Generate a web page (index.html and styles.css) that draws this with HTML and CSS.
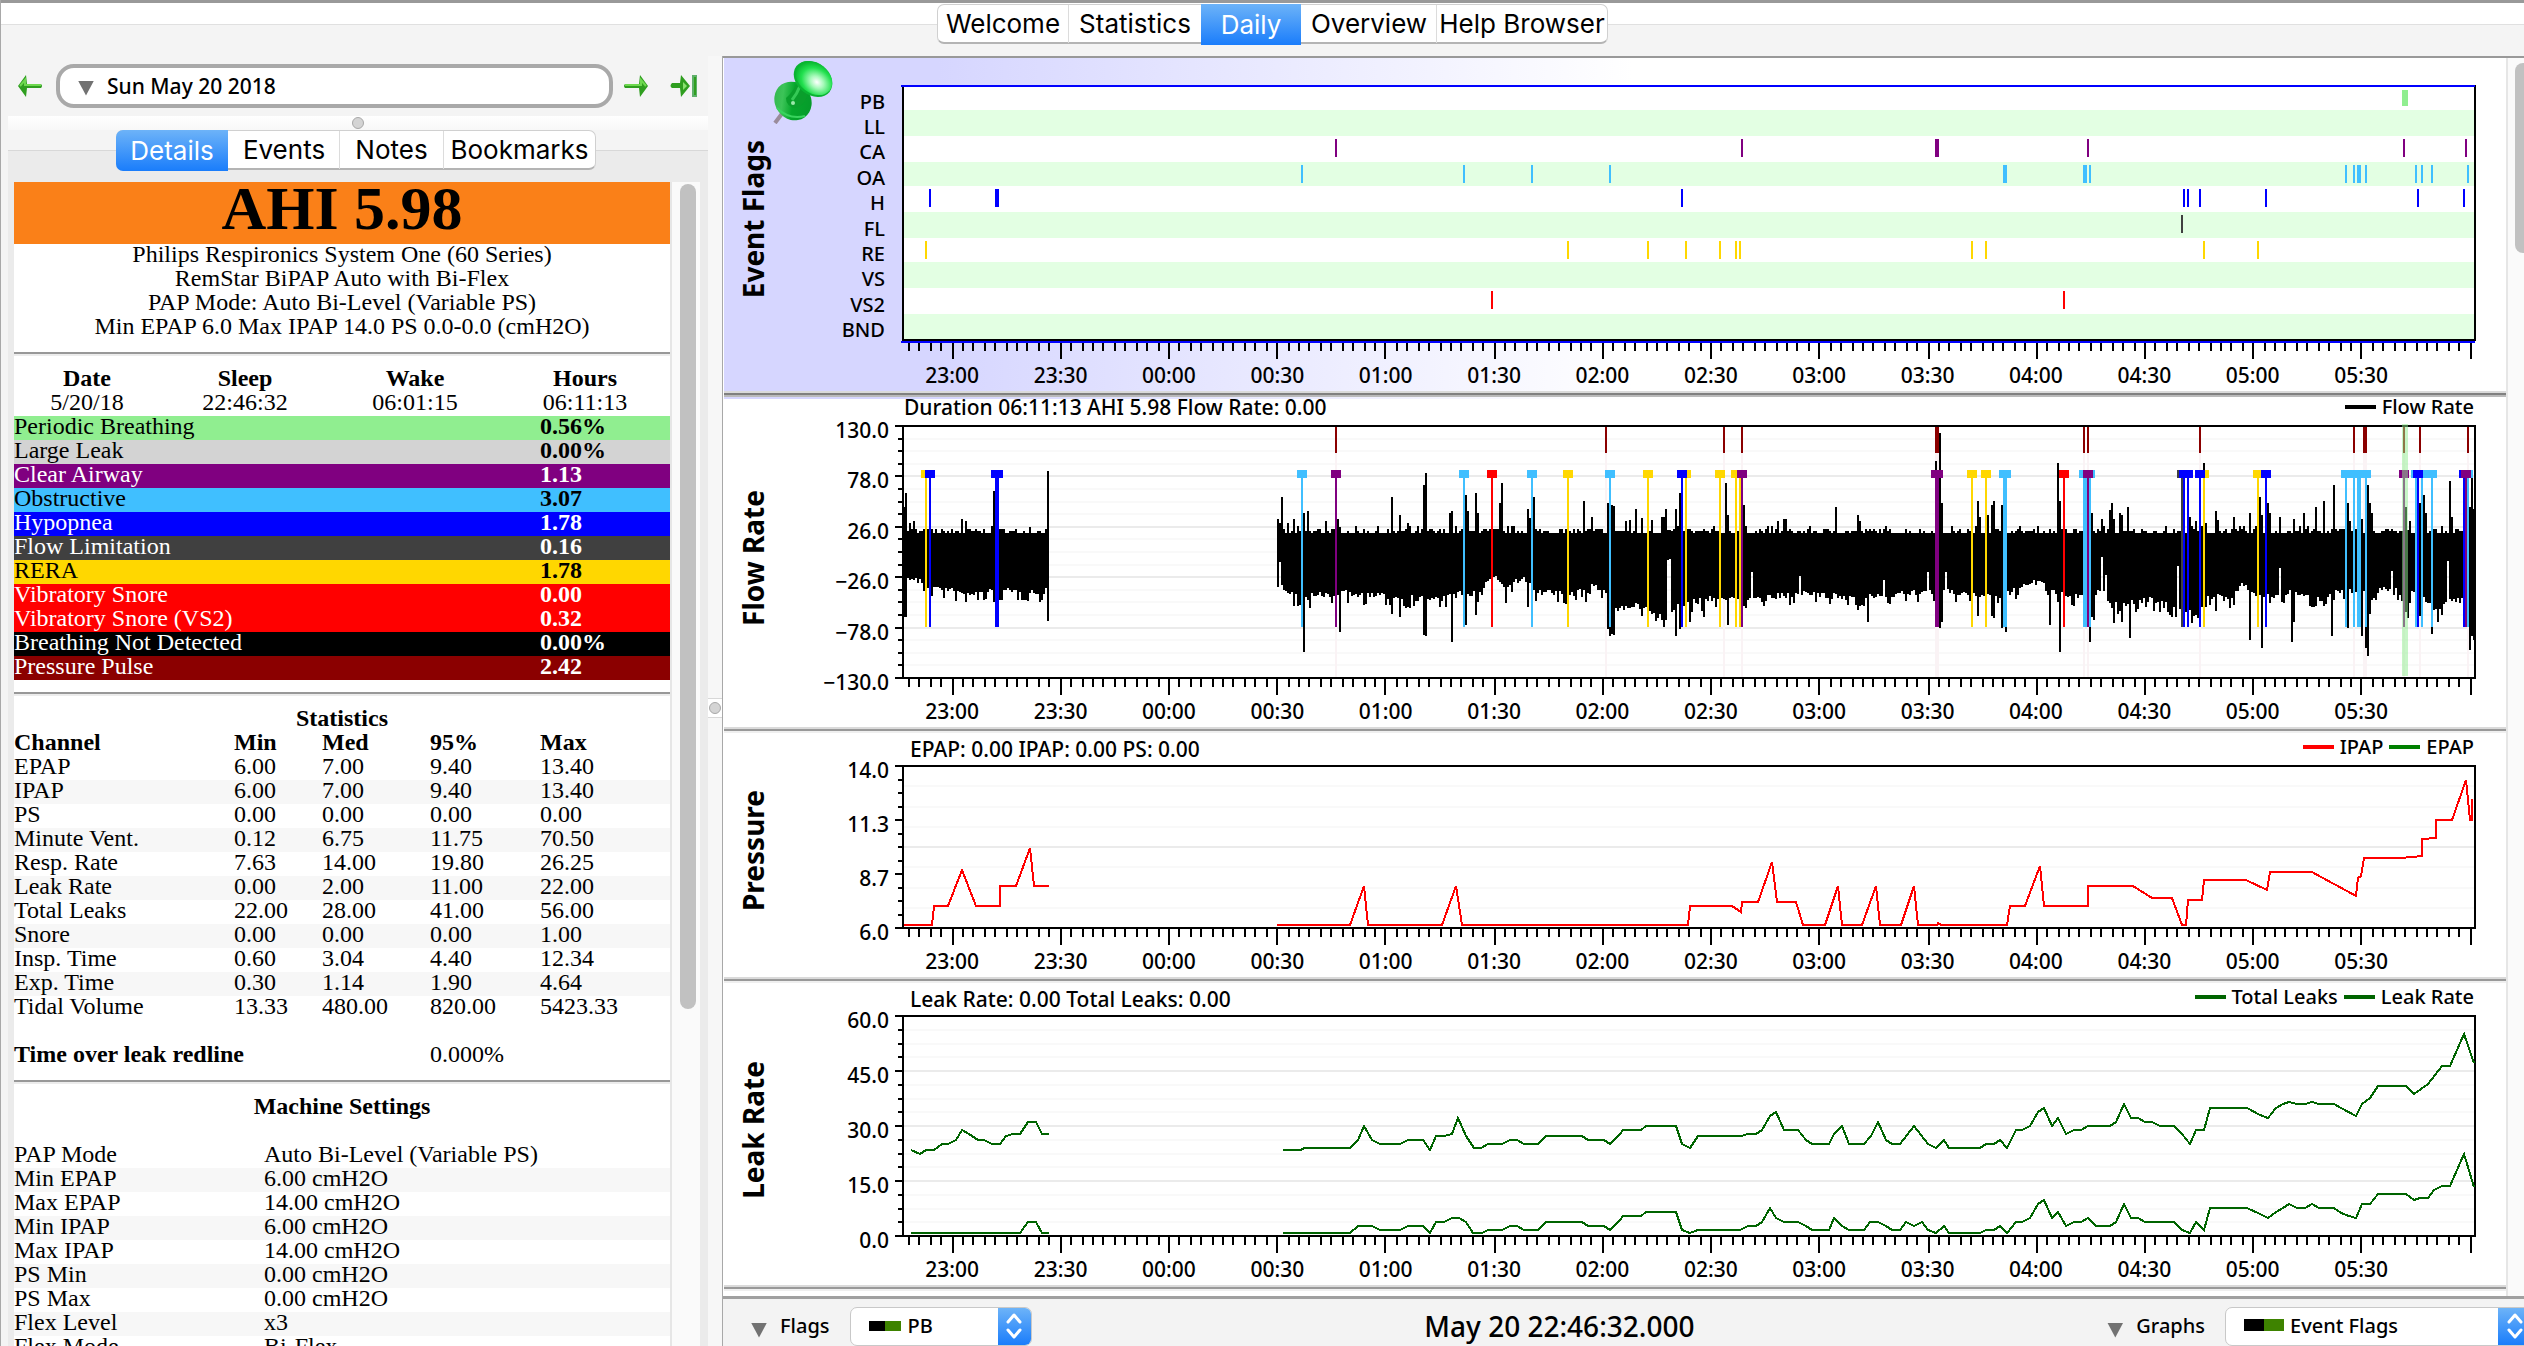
FILE: index.html
```html
<!DOCTYPE html>
<html lang="en">
<head>
<meta charset="utf-8">
<title>Daily</title>
<link rel="stylesheet" href="styles.css">
</head>
<body>
<header class="topbar">
  <nav class="tabs tabs-main" aria-label="Pages">
    <button class="tab">Welcome</button>
    <button class="tab">Statistics</button>
    <button class="tab active">Daily</button>
    <button class="tab">Overview</button>
    <button class="tab">Help Browser</button>
  </nav>
</header>
<div class="workspace">
  <aside class="sidebar">
    <div class="datebar">
      <button class="arrow" aria-label="Previous day">
        <svg width="26" height="24" viewBox="0 0 26 24"><path d="M1 12 9 1l1 9h14q2 2 0 4H10l-1 9z" fill="#2f9e1f"/><path d="M3 12l5-6v5h16" fill="none" stroke="#6ed84f" stroke-width="2"/></svg>
      </button>
      <button class="date"><span class="tri"></span>Sun May 20 2018</button>
      <button class="arrow next" aria-label="Next day">
        <svg width="26" height="24" viewBox="0 0 26 24"><path d="M25 12 17 1l-1 9H2q-2 2 0 4h14l1 9z" fill="#2f9e1f"/><path d="M2 11h16V6l5 6" fill="none" stroke="#6ed84f" stroke-width="2"/></svg>
      </button>
      <button class="arrow last" aria-label="Last day">
        <svg width="28" height="24" viewBox="0 0 28 24"><path d="M20 12 11 1l-1 8H2q-3 3 0 5h8l1 9z" fill="#2f9e1f"/><path d="M13 8l4 4-4 4" fill="#8be070"/><path d="M22 1h5v22h-5z" fill="#5fb06a"/><path d="M24 3h2v18h-2z" fill="#2f9e1f"/></svg>
      </button>
    </div>
    <div class="hsplit"><span class="knob"></span></div>
    <div class="subtabs">
      <nav class="tabs tabs-sub" aria-label="Day sections">
        <button class="tab active">Details</button>
        <button class="tab">Events</button>
        <button class="tab">Notes</button>
        <button class="tab">Bookmarks</button>
      </nav>
    </div>
    <div class="group">
      <article class="report">
        <h1 class="ahi">AHI 5.98</h1>
        <p class="machine">Philips Respironics System One (60 Series)<br>RemStar BiPAP Auto with Bi-Flex<br>PAP Mode: Auto Bi-Level (Variable PS)<br>Min EPAP 6.0 Max IPAP 14.0 PS 0.0-0.0 (cmH2O)</p>
        <hr>
        <table class="session">
          <tr><th>Date</th><th>Sleep</th><th>Wake</th><th>Hours</th></tr>
          <tr><td>5/20/18</td><td>22:46:32</td><td>06:01:15</td><td>06:11:13</td></tr>
        </table>
        <table class="indices">
          <tr class="pb"><td>Periodic Breathing</td><th>0.56%</th></tr>
          <tr class="ll"><td>Large Leak</td><th>0.00%</th></tr>
          <tr class="ca"><td>Clear Airway</td><th>1.13</th></tr>
          <tr class="oa"><td>Obstructive</td><th>3.07</th></tr>
          <tr class="hy"><td>Hypopnea</td><th>1.78</th></tr>
          <tr class="fl"><td>Flow Limitation</td><th>0.16</th></tr>
          <tr class="re"><td>RERA</td><th>1.78</th></tr>
          <tr class="vs"><td>Vibratory Snore</td><th>0.00</th></tr>
          <tr class="vs"><td>Vibratory Snore (VS2)</td><th>0.32</th></tr>
          <tr class="bnd"><td>Breathing Not Detected</td><th>0.00%</th></tr>
          <tr class="pp"><td>Pressure Pulse</td><th>2.42</th></tr>
        </table>
        <hr>
        <table class="stats">
          <caption>Statistics</caption>
          <thead><tr><th>Channel</th><th>Min</th><th>Med</th><th>95%</th><th>Max</th></tr></thead>
          <tbody>
          <tr><td>EPAP</td><td>6.00</td><td>7.00</td><td>9.40</td><td>13.40</td></tr>
          <tr><td>IPAP</td><td>6.00</td><td>7.00</td><td>9.40</td><td>13.40</td></tr>
          <tr><td>PS</td><td>0.00</td><td>0.00</td><td>0.00</td><td>0.00</td></tr>
          <tr><td>Minute Vent.</td><td>0.12</td><td>6.75</td><td>11.75</td><td>70.50</td></tr>
          <tr><td>Resp. Rate</td><td>7.63</td><td>14.00</td><td>19.80</td><td>26.25</td></tr>
          <tr><td>Leak Rate</td><td>0.00</td><td>2.00</td><td>11.00</td><td>22.00</td></tr>
          <tr><td>Total Leaks</td><td>22.00</td><td>28.00</td><td>41.00</td><td>56.00</td></tr>
          <tr><td>Snore</td><td>0.00</td><td>0.00</td><td>0.00</td><td>1.00</td></tr>
          <tr><td>Insp. Time</td><td>0.60</td><td>3.04</td><td>4.40</td><td>12.34</td></tr>
          <tr><td>Exp. Time</td><td>0.30</td><td>1.14</td><td>1.90</td><td>4.64</td></tr>
          <tr><td>Tidal Volume</td><td>13.33</td><td>480.00</td><td>820.00</td><td>5423.33</td></tr>
          </tbody>
          <tfoot><tr><th colspan="3">Time over leak redline</th><td colspan="2">0.000%</td></tr></tfoot>
        </table>
        <hr>
        <table class="settings">
          <caption>Machine Settings</caption>
          <tbody>
          <tr><td>PAP Mode</td><td>Auto Bi-Level (Variable PS)</td></tr>
          <tr><td>Min EPAP</td><td>6.00 cmH2O</td></tr>
          <tr><td>Max EPAP</td><td>14.00 cmH2O</td></tr>
          <tr><td>Min IPAP</td><td>6.00 cmH2O</td></tr>
          <tr><td>Max IPAP</td><td>14.00 cmH2O</td></tr>
          <tr><td>PS Min</td><td>0.00 cmH2O</td></tr>
          <tr><td>PS Max</td><td>0.00 cmH2O</td></tr>
          <tr><td>Flex Level</td><td>x3</td></tr>
          <tr><td>Flex Mode</td><td>Bi-Flex</td></tr>
          </tbody>
        </table>
      </article>
      <div class="scroll side-scroll"><span class="thumb"></span></div>
    </div>
  </aside>
  <div class="vsplit"><div class="grip"><span class="knob"></span></div></div>
  <main class="graphs">
    <div class="graph-area">
      <div class="stack">
        <section class="graph flags-graph">
          <svg class="pin" width="60" height="64" viewBox="0 0 60 64">
            <defs>
              <radialGradient id="cap" cx=".62" cy=".55" r=".6"><stop offset="0" stop-color="#fff"/><stop offset=".3" stop-color="#a8fabb"/><stop offset=".7" stop-color="#22e04f"/><stop offset="1" stop-color="#08b52f"/></radialGradient>
              <linearGradient id="base" x1="0" y1="0" x2="1" y2="1"><stop offset="0" stop-color="#2fae4a"/><stop offset=".3" stop-color="#3cc458"/><stop offset=".5" stop-color="#06a72c"/><stop offset="1" stop-color="#06962a"/></linearGradient>
            </defs>
            <path d="M2 63 11 51" stroke="#9a8c9c" stroke-width="4"/>
            <ellipse cx="20" cy="41" rx="18" ry="20" transform="rotate(-35 20 41)" fill="url(#base)"/>
            <path d="M4 48q12 12 28 8" fill="none" stroke="#39d45e" stroke-width="2"/>
            <path d="M23 25q-4 8-10 13 0 8 9 10 9-2 12-12 3-5 9-8z" fill="#0a9e2c"/>
            <path d="M27 26q-3 8-8 14" fill="none" stroke="#35c956" stroke-width="3"/>
            <circle cx="20" cy="43" r="2" fill="#9be8ab"/>
            <ellipse cx="40" cy="19" rx="21" ry="16" transform="rotate(38 40 19)" fill="#0ab332"/>
            <ellipse cx="41" cy="18" rx="20" ry="15" transform="rotate(38 41 18)" fill="url(#cap)"/>
          </svg>
          <h2 class="title">Event Flags</h2>
          <ol class="rows">
            <li>PB</li><li>LL</li><li>CA</li><li>OA</li><li>H</li><li>FL</li><li>RE</li><li>VS</li><li>VS2</li><li>BND</li>
          </ol>
          <div class="plot"><svg id="flags" height="258" viewBox="902 85 1574 258" preserveAspectRatio="none"></svg></div>
          <div class="xaxis"></div>
        </section>
        <section class="graph flow-graph">
          <h2 class="title">Flow Rate</h2>
          <div class="head"><span>Duration 06:11:13 AHI 5.98 Flow Rate: 0.00</span><span class="legend"><i class="key black"></i>Flow Rate</span></div>
          <div class="yaxis"><span>130.0</span><span>78.0</span><span>26.0</span><span>−26.0</span><span>−78.0</span><span>−130.0</span></div>
          <div class="plot"><svg id="flow" height="254" viewBox="902 425 1574 254" preserveAspectRatio="none"></svg></div>
          <div class="xaxis"></div>
        </section>
        <section class="graph pressure-graph">
          <h2 class="title">Pressure</h2>
          <div class="head inset"><span>EPAP: 0.00 IPAP: 0.00 PS: 0.00</span><span class="legend"><i class="key red"></i>IPAP<i class="key green"></i>EPAP</span></div>
          <div class="yaxis"><span>14.0</span><span>11.3</span><span>8.7</span><span>6.0</span></div>
          <div class="plot"><svg id="pressure" height="164" viewBox="902 765 1574 164" preserveAspectRatio="none"></svg></div>
          <div class="xaxis"></div>
        </section>
        <section class="graph leak-graph">
          <h2 class="title">Leak Rate</h2>
          <div class="head inset"><span>Leak Rate: 0.00 Total Leaks: 0.00</span><span class="legend"><i class="key dark"></i>Total Leaks<i class="key dark"></i>Leak Rate</span></div>
          <div class="yaxis"><span>60.0</span><span>45.0</span><span>30.0</span><span>15.0</span><span>0.0</span></div>
          <div class="plot"><svg id="leak" height="222" viewBox="902 1015 1574 222" preserveAspectRatio="none"></svg></div>
          <div class="xaxis"></div>
        </section>
      </div>
      <div class="scroll main-scroll"><span class="thumb"></span></div>
    </div>
    <footer class="bottombar">
      <span class="tri"></span>
      <label for="flagSel">Flags</label>
      <div class="combo combo-flags"><select id="flagSel"><option>PB</option></select><i class="swatch"></i><i class="updown"><svg width="16" height="26" viewBox="0 0 16 26"><path d="M2 9l6-7 6 7M2 17l6 7 6-7" fill="none" stroke="#fff" stroke-width="3" stroke-linecap="round" stroke-linejoin="round"/></svg></i></div>
      <time class="cursor-time">May 20 22:46:32.000</time>
      <span class="tri"></span>
      <label for="graphSel">Graphs</label>
      <div class="combo combo-graphs"><select id="graphSel"><option>Event Flags</option></select><i class="swatch"></i><i class="updown"><svg width="16" height="26" viewBox="0 0 16 26"><path d="M2 9l6-7 6 7M2 17l6 7 6-7" fill="none" stroke="#fff" stroke-width="3" stroke-linecap="round" stroke-linejoin="round"/></svg></i></div>
    </footer>
  </main>
</div>
<script src="charts.js"></script>
</body>
</html>
```

FILE: styles.css
```css
* { box-sizing: border-box; }
body {
  margin: 0; height: 100vh; overflow: hidden;
  display: flex; flex-direction: column;
  background: #f4f4f4; color: #000;
  border-left: 1px solid #a8a8a8;
  font: 500 20px/24px "Noto Sans", "Open Sans", sans-serif;
}
button { font: inherit; color: inherit; border: 0; padding: 0; background: none; }
h1, h2, p, ol { margin: 0; padding: 0; }
ol { list-style: none; }

/* tabs */
.topbar {
  flex: none; height: 56px; padding: 1px 0 0 20px;
  display: flex; justify-content: center; align-items: flex-start;
  border-top: 3px solid #999;
  background: linear-gradient(#fff 21px, #e0e0e0 21px 22px, #f4f4f4 22px);
}
.tabs {
  display: grid; height: 40px; background: #fff;
  border: 1px solid #d0d0d0; border-bottom: 2px solid #b4b4b4; border-radius: 7px;
  font: 26px/38px Inter, sans-serif;
}
.tabs-main { grid-template-columns: 130px 133px 100px 135px 171px; }
.tabs-sub { grid-template-columns: 111px 111px 104px 152px; }
.tab { border-left: 1px solid #dcdcdc; white-space: nowrap; }
.tab:first-child, .tab.active, .tab.active + .tab { border-left-color: transparent; }
.tab:first-child { border-left: 0; }
.tab.active {
  color: #fff; margin: -1px 0 -2px;
  background: linear-gradient(#6db3f8, #1a7dfb); border: 0;
}
.tabs-sub .tab.active { border-radius: 7px 0 0 7px; margin-left: -1px; }

.workspace { flex: 1; min-height: 0; display: flex; }

/* sidebar */
.sidebar { flex: none; width: 707px; display: flex; flex-direction: column; }
.datebar { flex: none; height: 60px; padding: 0 10px 0 16px; display: flex; align-items: center; }
.arrow { height: 24px; display: block; }
.arrow svg { display: block; }
.date {
  flex: 1; height: 44px; margin: 0 10px 0 13px; padding-left: 18px;
  display: flex; align-items: center; gap: 13px;
  border: 4px solid #a9a9a9; border-radius: 18px; background: #fff; font-size: 21px;
}
.last { margin-left: 21px; }
.tri { flex: none; width: 16px; height: 15px; margin-top: 4px; background: #727272; clip-path: polygon(0 0, 100% 0, 50% 100%); }
.hsplit {
  flex: none; height: 14px; margin-left: 7px; display: flex; justify-content: center; align-items: center;
  background: linear-gradient(#fff, #f8f8f8);
}
.knob { width: 12px; height: 12px; border-radius: 50%; border: 1px solid #a8a8a8; background: #d4d4d4; }
.subtabs {
  flex: none; height: 52px; margin-left: 7px; padding-right: 4px; display: flex; justify-content: center;
  background: linear-gradient(#f4f4f4 20px, #d8d8d8 20px 21px, #ebebeb 21px);
}
.group { flex: 1; min-height: 0; margin-left: 7px; padding: 0 8px 0 6px; display: flex; background: #ebebeb; }
.report {
  flex: 1; background: #fff;
  font: 24px/24px "Liberation Serif", "Times New Roman", serif;
}
.ahi { height: 60px; background: #fa8018; text-align: center; font-size: 62px; line-height: 52px; }
.machine { text-align: center; white-space: nowrap; background: linear-gradient(#fa8018 2px, transparent 2px); padding-bottom: 2px; }
hr { height: 4px; margin: 12px 0; border: 0; border-top: 2px solid #989898; background: #ececec; }
table { width: 100%; border-collapse: collapse; table-layout: fixed; }
th, td { padding: 0; height: 24px; line-height: 20px; vertical-align: top; text-align: left; white-space: nowrap; }
caption { font-weight: bold; line-height: 20px; padding-bottom: 4px; }
.session th, .session td { text-align: center; }
.session th:first-child { width: 146px; }
.indices th { width: 130px; }
.pb { background: #90ee90; }
.ll { background: #d3d3d3; }
.ca { background: #800080; color: #fff; }
.oa { background: #40bfff; }
.hy { background: #00f; color: #fff; }
.fl { background: #404040; color: #fff; }
.re { background: #ffd700; }
.vs { background: #f00; color: #fff; }
.bnd { background: #000; color: #fff; }
.pp { background: #8b0000; color: #fff; }
.stats th:nth-child(1) { width: 220px; }
.stats th:nth-child(2) { width: 88px; }
.stats th:nth-child(3) { width: 108px; }
.stats th:nth-child(4) { width: 110px; }
.stats tbody tr:nth-child(even), .settings tr:nth-child(even) { background: #f7f7f7; }
.stats tfoot th, .stats tfoot td { height: 48px; padding-top: 24px; }
.settings caption { padding-bottom: 28px; }
.settings td:first-child { width: 250px; }

.scroll { flex: none; background: #fafafa; border-left: 2px solid #e6e6e6; }
.thumb { display: block; width: 16px; border-radius: 8px; background: #c1c1c1; }
.side-scroll { width: 30px; padding: 2px 0 0 8px; }
.side-scroll .thumb { height: 825px; }

.vsplit { flex: none; width: 14px; background: #f7f7f7; display: flex; align-items: center; padding-top: 14px; }
.grip { width: 14px; height: 20px; display: flex; align-items: center; justify-content: center; background: #fff; border: solid #d8d8d8; border-width: 1px 0; }

/* graphs */
.graphs { flex: 1; min-width: 0; display: flex; flex-direction: column; border-left: 1px solid #a8a8a8; }
.graph-area { flex: 1; min-height: 0; display: flex; background: #fff; border-top: 2px solid #999; border-bottom: 2px solid #a0a0a0; padding-left: 1px; }
.stack { flex: 1; min-width: 0; }
.main-scroll { width: 18px; padding: 5px 0 0 7px; }
.main-scroll .thumb { height: 190px; }
.graph {
  position: relative; display: grid; grid-template-columns: 58px 120px 1fr 30px;
  padding-bottom: 6px;
  background: linear-gradient(#dadada 2px, #999 2px 4px, #efefef 4px) bottom / 100% 6px no-repeat;
}
.flags-graph {
  padding-top: 27px;
  background:
    linear-gradient(#dadada 2px, #808080 2px 4px, #bababa 4px) bottom / 100% 6px no-repeat,
    linear-gradient(90deg, #d6d6ff 12%, #fff 51%);
}
.flow-graph {
  background:
    linear-gradient(#dadada 2px, #999 2px 4px, #efefef 4px) bottom / 100% 6px no-repeat,
    linear-gradient(90deg, #d6d6ff 12%, #fff 51%) top / 100% 2px no-repeat;
}
.pin { position: absolute; left: 49px; top: 2px; }
.title {
  grid-column: 1; grid-row: 1 / span 3; writing-mode: vertical-rl; transform: rotate(180deg);
  justify-self: center; align-self: center; margin-bottom: 8px;
  font-size: 28px; line-height: 36px; font-weight: 700;
}
.flags-graph .title { margin-bottom: 38px; }
.head { grid-column: 3; grid-row: 1; height: 32px; padding: 0 2px; line-height: 32px; font-size: 21px; display: flex; justify-content: space-between; }
.flow-graph .head { height: 28px; line-height: 20px; }
.head.inset { padding-left: 8px; }
.legend { display: flex; align-items: center; gap: 6px; font-size: 20px; line-height: 20px; height: 20px; margin-top: 4px; }
.flow-graph .legend { margin-top: 0; }
.key { width: 31px; height: 4px; }
.black { background: #000; }
.red { background: #f00; }
.green { background: #008000; }
.dark { background: #006400; }
.yaxis, .rows { grid-column: 2; grid-row: 2; padding-right: 13px; text-align: right; }
.yaxis { display: flex; flex-direction: column; justify-content: space-between; margin: -7px 0 -15px; font-size: 21px; }
.rows { display: grid; grid-template-rows: repeat(10, 1fr); padding-right: 17px; margin: 4px 0 0; align-items: center; }
.plot { grid-column: 3; grid-row: 2; }
.plot svg, .xaxis svg { display: block; width: 100%; overflow: visible; }
.xaxis { grid-column: 3; grid-row: 3; height: 48px; font-size: 21px; line-height: 32px; }
.hours { display: flex; width: 96.4%; margin-left: -4px; }
.hours span { flex: 1; text-align: center; }

/* bottom bar */
.bottombar { flex: none; height: 48px; display: flex; align-items: center; padding: 8px 0 1px 28px; border-top: 1px solid #a0a0a0; background: #f3f3f3; }
.bottombar label { margin: 0 20px 0 13px; }
.bottombar .tri { margin-top: 8px; }
.combo { flex: none; position: relative; height: 39px; border: 1px solid #c8c8c8; border-radius: 7px; background: #fff; overflow: hidden; }
.combo-flags { width: 182px; }
.combo-graphs { width: 307px; margin-right: -8px; }
.combo select { appearance: none; width: 100%; height: 36px; border: 0; padding: 0 0 0 57px; background: none; font: inherit; color: inherit; }
.combo-graphs select { padding-left: 64px; }
.swatch { position: absolute; left: 18px; top: 13px; width: 32px; height: 10px; background: linear-gradient(90deg, #000 50%, #3e8300 50%); }
.combo-graphs .swatch { width: 40px; height: 12px; top: 11px; }
.updown { position: absolute; right: 0; top: 0; bottom: 0; width: 33px; display: flex; align-items: center; justify-content: center; background: linear-gradient(#6db3f8, #1a7dfb); }
.cursor-time { flex: 1; text-align: center; font-size: 28px; padding-right: 20px; }
```

FILE: charts.js
```javascript
const NS = "http://www.w3.org/2000/svg";
const LEFT = 902, RIGHT = 2476;

function add(parent, name, attrs) {
  const el = document.createElementNS(NS, name);
  for (const k in attrs) el.setAttribute(k, attrs[k]);
  parent.appendChild(el);
  return el;
}
function rect(svg, x, y, width, height, fill) {
  return add(svg, "rect", { x, y, width, height, fill, "shape-rendering": "crispEdges" });
}
function frame(svg, top, bottom) {
  rect(svg, LEFT, top, RIGHT - LEFT, 2, "#000");
  rect(svg, LEFT, bottom - 2, RIGHT - LEFT, 2, "#000");
  rect(svg, LEFT, top, 2, bottom - top, "#000");
  rect(svg, RIGHT - 2, top, 2, bottom - top, "#000");
}
function grid(svg, top, height, n, strong) {
  for (let i = 1; i < n; i++)
    rect(svg, LEFT, top + Math.round(height * i / n), RIGHT - LEFT, 2, i % strong ? "#f9f9f9" : "#ebebeb");
}
function yTicks(svg, top, height, n, strong) {
  for (let i = 0; i <= n; i++) {
    const w = i % strong ? 4 : 7;
    rect(svg, LEFT - w, top + Math.round(height * i / n), w, 2, "#000");
  }
}

/* time axis, a tick each three minutes and a label each half hour */
const times = ["23:00","23:30","00:00","00:30","01:00","01:30","02:00","02:30","03:00","03:30","04:00","04:30","05:00","05:30"];
document.querySelectorAll(".xaxis").forEach(axis => {
  const svg = add(axis, "svg", { height: 16, viewBox: `${LEFT} 0 1574 16`, preserveAspectRatio: "none" });
  for (let k = -4; k <= 140; k++)
    rect(svg, 2 * Math.round((951 + 10.845 * k) / 2), 0, 2, k % 10 ? 8 : 16, "#000");
  const row = document.createElement("div");
  row.className = "hours";
  times.forEach(t => { const s = document.createElement("span"); s.textContent = t; row.appendChild(s); });
  axis.appendChild(row);
});

/* events: x and width */
const events = {
  CA: { row: 2, color: "#800080", at: [[1336,2],[1742,2],[1937,4],[2088,2],[2404,2],[2466,2]] },
  OA: { row: 3, color: "#40bfff", at: [[1302,2],[1464,2],[1532,2],[1610,2],[2005,4],[2085,4],[2090,2],[2346,2],[2354,2],[2359,4],[2366,2],[2416,2],[2422,2],[2432,2],[2468,2]] },
  H: { row: 4, color: "#0000ff", at: [[930,2],[997,4],[1682,2],[2184,2],[2188,2],[2200,2],[2266,2],[2418,2],[2464,2]] },
  FL: { row: 5, color: "#404040", at: [[2182,2]] },
  RE: { row: 6, color: "#ffd700", at: [[926,2],[1568,2],[1648,2],[1686,2],[1720,2],[1736,2],[1740,2],[1972,2],[1986,2],[2204,2],[2258,2]] },
  VS2: { row: 8, color: "#ff0000", at: [[1492,2],[2064,2]] }
};
const rowTops = [87,110,136,162,186,212,238,262,288,314,339];

const flags = document.getElementById("flags");
for (let i = 0; i < 10; i++)
  rect(flags, LEFT, rowTops[i], RIGHT - LEFT, rowTops[i + 1] - rowTops[i], i % 2 ? "#e3ffe3" : "#fff");
rect(flags, 2402, 90, 6, 16, "#90ee90");
for (const e of Object.values(events))
  for (const [x, w] of e.at) rect(flags, x - w / 2, rowTops[e.row] + 3, w, 18, e.color);
rect(flags, LEFT, 85, 2, 256, "#000");
rect(flags, RIGHT - 2, 85, 2, 256, "#000");
rect(flags, LEFT, 339, RIGHT - LEFT, 2, "#000");
rect(flags, LEFT - 1, 85, RIGHT - LEFT, 2, "#00f");
rect(flags, LEFT - 1, 341, RIGHT - LEFT, 2, "#00f");

/* flow waveform: lower envelope, then single breaths [x, top, bottom] */
const lower = [[904,572],[916,576],[930,584],[945,586],[960,590],[1000,588],[1050,588],[1278,584],[1300,593],[1340,590],[1400,594],[1440,596],[1464,590],[1482,590],[1490,574],[1497,572],[1506,590],[1512,580],[1528,576],[1536,588],[1570,592],[1590,581],[1604,588],[1612,606],[1636,602],[1660,612],[1676,604],[1690,600],[1720,594],[1760,596],[1800,590],[1840,594],[1880,592],[1936,588],[1965,590],[2000,592],[2012,590],[2020,582],[2045,578],[2050,588],[2080,594],[2102,588],[2112,602],[2150,596],[2170,602],[2195,612],[2208,592],[2230,596],[2242,582],[2262,594],[2290,590],[2320,596],[2336,588],[2370,588],[2395,584],[2404,600],[2413,588],[2436,606],[2450,596],[2474,600]];
const breaths = [[904,507,617],[906,493,617],[910,523,0],[914,521,0],[962,519,0],[966,521,602],[978,0,600],[994,491,602],[999,523,0],[1030,527,0],[1040,0,602],[1048,471,621],[1278,519,587],[1280,523,562],[1282,497,585],[1288,523,0],[1294,519,606],[1304,513,652],[1308,511,600],[1310,0,608],[1326,521,0],[1338,519,0],[1340,527,632],[1392,497,614],[1400,515,617],[1408,523,607],[1424,485,635],[1426,473,636],[1450,513,0],[1452,511,642],[1466,495,625],[1468,511,0],[1476,493,615],[1478,513,602],[1500,503,582],[1502,483,584],[1528,509,607],[1530,518,0],[1534,497,590],[1566,0,604],[1584,501,0],[1586,0,602],[1592,517,0],[1608,503,629],[1610,505,636],[1612,505,634],[1614,506,635],[1626,521,0],[1630,520,0],[1636,509,0],[1642,518,616],[1652,520,0],[1658,0,618],[1662,517,620],[1664,517,627],[1666,509,620],[1668,530,560],[1670,530,559],[1676,509,636],[1680,493,629],[1690,0,622],[1704,0,617],[1726,483,600],[1728,515,625],[1744,505,0],[1746,0,608],[1752,0,572],[1778,521,0],[1784,519,0],[1786,519,0],[1800,0,576],[1836,507,0],[1858,515,610],[1860,521,0],[1868,0,622],[1884,0,580],[1928,0,572],[1936,461,0],[1940,433,628],[1942,503,622],[1946,0,572],[1978,501,616],[1980,517,0],[1988,515,0],[1992,505,616],[1994,501,618],[2002,505,628],[2006,0,632],[2050,0,625],[2058,463,602],[2060,501,652],[2090,0,642],[2092,513,617],[2094,0,620],[2102,519,557],[2106,0,575],[2110,510,0],[2112,503,0],[2114,519,623],[2120,513,0],[2122,515,622],[2128,507,0],[2130,0,638],[2136,0,612],[2164,0,608],[2172,0,617],[2178,0,566],[2190,517,0],[2196,521,0],[2204,463,0],[2206,523,0],[2216,511,611],[2218,520,0],[2234,517,0],[2250,513,640],[2260,497,0],[2262,515,648],[2268,503,0],[2270,513,0],[2280,517,568],[2292,0,642],[2294,519,622],[2304,513,0],[2316,507,606],[2324,501,606],[2332,0,636],[2334,485,600],[2348,503,628],[2350,521,0],[2362,519,636],[2366,0,648],[2368,485,656],[2370,503,614],[2372,513,0],[2392,0,571],[2406,507,612],[2408,530,618],[2410,521,0],[2420,503,616],[2424,495,0],[2426,513,0],[2432,0,634],[2438,0,622],[2448,0,561],[2450,481,0],[2452,517,0],[2470,507,650],[2472,475,636],[2474,509,640]];

let seed = 7;
const rand = () => (seed = (seed * 16807) % 2147483647) / 2147483647;
function envelope(x) {
  let i = 1;
  while (i < lower.length - 1 && lower[i][0] < x) i++;
  const [x0, y0] = lower[i - 1], [x1, y1] = lower[i];
  return y0 + (y1 - y0) * Math.min(1, Math.max(0, (x - x0) / (x1 - x0)));
}
const byX = new Map(breaths.map(b => [b[0], b]));
const flow = document.getElementById("flow");
grid(flow, 425, 252, 20, 4);
const pulses = [[1336,2],[1606,2],[1724,2],[1742,2],[1937,4],[2084,2],[2088,2],[2200,2],[2354,2],[2365,4],[2404,2],[2420,2],[2468,2]];
for (const [x, w] of pulses) {
  rect(flow, x - w / 2, 453, w, 224, "#faf3f5");
  rect(flow, x - w / 2, 427, w, 26, "#8b0000");
}
let wave = "";
for (const [from, to] of [[904, 1048], [1278, 2474]])
  for (let x = from; x <= to; x += 2) {
    const r = rand(), s = rand(), b = byX.get(x) || [x, 0, 0];
    const top = b[1] || (r > .94 ? 526 : r > .75 ? 529 : r > .45 ? 531 : 533);
    const bottom = b[2] || Math.round(envelope(x) + s * 8 + (s > .8 ? 8 * (s - .3) : 0));
    wave += `M${x - 1} ${top}h2V${bottom}h-2z`;
  }
add(flow, "path", { d: wave, fill: "#000", "shape-rendering": "crispEdges" });
for (const key of ["FL", "RE", "OA", "H", "CA", "VS2"]) {
  const e = events[key];
  for (const [x, w] of e.at) {
    rect(flow, x - w / 2, 478, w, 149, e.color);
    rect(flow, x - 4 - w / 2, 470, 8 + w, 8, e.color);
  }
}
frame(flow, 425, 679);
rect(flow, 2402, 424, 6, 252, "rgba(144,238,144,.5)");
yTicks(flow, 425, 252, 20, 4);

function line(svg, color, points) {
  add(svg, "polyline", { points, fill: "none", stroke: color, "stroke-width": 2, "shape-rendering": "crispEdges" });
}

const pressure = document.getElementById("pressure");
grid(pressure, 765, 162, 8, 4);
frame(pressure, 765, 929);
yTicks(pressure, 765, 162, 12, 4);
line(pressure, "#f00", "904,925 932,925 934,906 948,906 962,870 976,906 1000,906 1000,886 1016,886 1030,848 1034,886 1049,886");
line(pressure, "#f00", "1277,925 1350,925 1364,886 1368,925 1442,925 1456,886 1462,925 1688,925 1690,906 1732,906 1741,912 1742,902 1758,902 1772,862 1777,902 1796,902 1803,925 1825,925 1838,886 1842,925 1862,925 1876,886 1880,925 1901,925 1914,886 1918,925 1937,925 1938,923 1941,925 2007,925 2010,906 2025,906 2040,866 2044,906 2088,906 2088,886 2133,886 2152,898 2172,898 2182,925 2186,925 2188,900 2202,900 2204,880 2246,880 2267,890 2270,872 2312,872 2356,896 2358,878 2361,876 2364,858 2401,858 2422,856 2422,839 2436,838 2436,820 2452,820 2466,780 2470,820 2472,820 2472,799");

const leak = document.getElementById("leak");
grid(leak, 1015, 220, 16, 4);
frame(leak, 1015, 1237);
yTicks(leak, 1015, 220, 16, 4);
line(leak, "#006400", "911,1150 920,1154 926,1150 934,1150 942,1144 948,1144 956,1140 962,1130 969,1134 978,1140 984,1140 992,1144 1000,1144 1006,1136 1013,1134 1020,1134 1028,1122 1036,1122 1042,1134 1049,1134");
line(leak, "#006400", "1283,1150 1301,1150 1304,1148 1350,1148 1358,1140 1364,1126 1372,1140 1380,1144 1400,1144 1408,1140 1423,1140 1430,1150 1436,1136 1444,1136 1452,1134 1458,1118 1466,1136 1474,1148 1481,1148 1488,1144 1502,1144 1510,1140 1517,1140 1524,1144 1538,1144 1546,1136 1582,1136 1588,1140 1604,1140 1610,1144 1620,1134 1623,1130 1641,1130 1646,1126 1676,1126 1682,1144 1690,1148 1698,1136 1741,1136 1748,1134 1756,1134 1762,1130 1770,1116 1776,1112 1784,1130 1798,1130 1806,1140 1812,1144 1829,1144 1834,1134 1842,1126 1849,1144 1864,1144 1871,1136 1878,1122 1886,1140 1892,1144 1900,1144 1914,1126 1928,1144 1936,1148 1944,1140 1949,1148 1980,1148 1986,1144 1994,1144 2000,1140 2007,1148 2016,1130 2022,1130 2030,1126 2038,1112 2044,1108 2052,1126 2058,1118 2066,1134 2074,1130 2081,1130 2088,1126 2110,1126 2116,1122 2124,1104 2131,1118 2138,1118 2145,1122 2152,1122 2160,1126 2174,1126 2182,1134 2190,1144 2196,1130 2204,1130 2210,1108 2247,1108 2260,1115 2268,1118 2276,1108 2283,1104 2289,1102 2297,1104 2305,1104 2312,1102 2319,1104 2334,1104 2341,1108 2356,1116 2362,1104 2370,1098 2378,1086 2406,1086 2414,1094 2428,1084 2442,1066 2450,1066 2464,1034 2474,1063");
line(leak, "#006400", "911,1233 1020,1233 1028,1222 1036,1222 1042,1233 1049,1233");
line(leak, "#006400", "1283,1233 1350,1233 1358,1226 1372,1226 1380,1230 1400,1230 1408,1226 1423,1226 1430,1233 1436,1222 1444,1222 1452,1218 1459,1218 1466,1222 1473,1233 1482,1233 1488,1230 1502,1230 1510,1226 1517,1226 1524,1230 1538,1230 1546,1222 1582,1222 1588,1226 1604,1226 1610,1230 1620,1220 1623,1216 1641,1216 1646,1212 1676,1212 1682,1230 1690,1233 1698,1230 1740,1230 1748,1226 1756,1226 1762,1222 1770,1208 1776,1218 1784,1222 1798,1222 1806,1226 1812,1230 1829,1230 1834,1218 1842,1226 1849,1230 1864,1230 1870,1222 1878,1222 1886,1226 1892,1230 1900,1230 1906,1222 1914,1226 1922,1222 1928,1230 1936,1233 1944,1226 1949,1233 1980,1233 1986,1230 1994,1230 2000,1226 2007,1233 2016,1222 2022,1222 2030,1218 2038,1204 2044,1200 2052,1218 2058,1212 2066,1226 2074,1222 2081,1222 2088,1218 2096,1226 2110,1226 2116,1222 2124,1204 2131,1218 2138,1218 2145,1222 2174,1222 2182,1230 2190,1233 2196,1222 2204,1230 2210,1208 2247,1208 2260,1214 2268,1218 2276,1212 2283,1208 2289,1204 2297,1208 2305,1208 2312,1204 2319,1208 2334,1208 2341,1213 2349,1216 2356,1218 2362,1204 2370,1204 2378,1194 2406,1194 2414,1200 2420,1198 2428,1198 2434,1190 2442,1186 2450,1186 2464,1154 2474,1187");
```
